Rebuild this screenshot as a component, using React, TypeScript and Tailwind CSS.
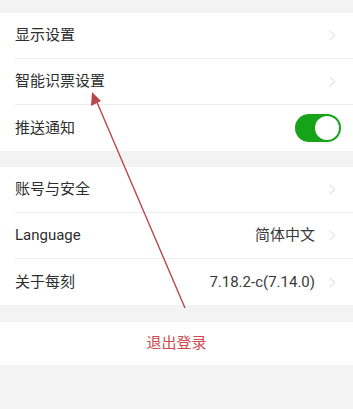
import { ChevronRight } from 'lucide-react';

function Row(props: { label: string; value?: string; last?: boolean; children?: React.ReactNode }) {
  return (
    <div className="flex h-[46px] items-center pl-[15px]">
      <div
        className={`flex h-full flex-1 items-center pr-[12px] ${
          props.last ? '' : 'border-b border-[#ececec]'
        }`}
      >
        <span className="flex-1 text-[15px] text-[#2e2e2e]">{props.label}</span>
        {props.value && <span className="mr-[9px] text-[15px] text-[#3a3a3a]">{props.value}</span>}
        {props.children ?? <ChevronRight size={17} strokeWidth={1.1} className="text-[#c8c8c8]" />}
      </div>
    </div>
  );
}

function Toggle() {
  return (
    <div className="flex h-[28px] w-[46px] items-center justify-end rounded-full bg-[#17a317] p-[2px]">
      <div className="h-[24px] w-[24px] rounded-full bg-white" />
    </div>
  );
}

export default function App() {
  return (
    <div
      className="relative h-[409px] w-[353px] overflow-hidden bg-[#f3f3f3]"
      style={{ fontFamily: 'Roboto, "Noto Sans CJK SC", sans-serif' }}
    >
      <div className="pt-[13px]">
        <div className="bg-white">
          <Row label="显示设置" />
          <Row label="智能识票设置" />
          <Row label="推送通知" last>
            <Toggle />
          </Row>
        </div>
        <div className="mt-[16px] bg-white">
          <Row label="账号与安全" />
          <Row label="Language" value="简体中文" />
          <Row label="关于每刻" value="7.18.2-c(7.14.0)" last />
        </div>
        <div className="mt-[17px] flex h-[43px] items-center justify-center bg-white">
          <span className="text-[15px] text-[#d14a50]">退出登录</span>
        </div>
      </div>

      <svg className="pointer-events-none absolute left-0 top-0" width="353" height="409">
        <line x1="185" y1="308" x2="96" y2="100" stroke="#b8474c" strokeWidth="1.4" />
        <polygon points="92,92 91,106 101,101" fill="#b8474c" />
      </svg>
    </div>
  );
}
